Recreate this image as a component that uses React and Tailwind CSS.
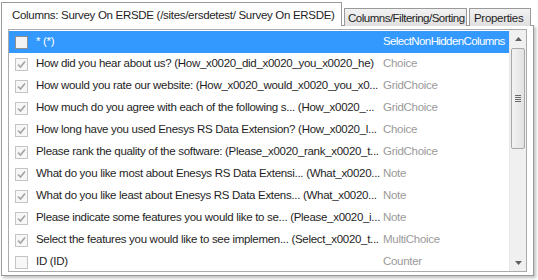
import { useState } from "react";

const rows = [
  { label: "* (*)", type: "SelectNonHiddenColumns", checked: false, selected: true },
  { label: "How did you hear about us? (How_x0020_did_x0020_you_x0020_he)", type: "Choice", checked: true },
  { label: "How would you rate our website: (How_x0020_would_x0020_you_x0...", type: "GridChoice", checked: true },
  { label: "How much do you agree with each of the following s... (How_x0020_...", type: "GridChoice", checked: true },
  { label: "How long have you used Enesys RS Data Extension? (How_x0020_l...", type: "Choice", checked: true },
  { label: "Please rank the quality of the software: (Please_x0020_rank_x0020_t...", type: "GridChoice", checked: true },
  { label: "What do you like most about Enesys RS Data Extensi... (What_x0020...", type: "Note", checked: true },
  { label: "What do you like least about Enesys RS Data Extens... (What_x0020...", type: "Note", checked: true },
  { label: "Please indicate some features you would like to se... (Please_x0020_i...", type: "Note", checked: true },
  { label: "Select the features you would like to see implemen... (Select_x0020_t...", type: "MultiChoice", checked: true },
  { label: "ID (ID)", type: "Counter", checked: false },
];

const CheckBox = ({ checked, selected }) => (
  <div
    className={`w-[13px] h-[13px] border flex items-center justify-center ${
      selected ? "border-[#8f8f8f] bg-[#f4f4f4]" : "border-[#c4c4c4] bg-[#f7f7f7]"
    }`}
  >
    {checked && (
      <svg width="9" height="9" viewBox="0 0 9 9">
        <path d="M1 4.5 L3.5 7 L8 1.5" fill="none" stroke="#a3a3a3" strokeWidth="1.6" />
      </svg>
    )}
  </div>
);

const App = () => {
  const [active] = useState(0);

  return (
    <div className="w-[538px] h-[280px] bg-white pl-[1px] pt-[2px] font-['Liberation_Sans',Arial,sans-serif] text-[11.5px] tracking-[-0.3px] text-[#1e1e1e]">
      {/* Tabs */}
      <div className="flex items-end h-[24px] w-[533px] relative z-10">
        <div className="h-[24px] w-[341px] border border-b-0 border-[#9a9a9a] bg-white pl-[10px] pt-[4px] whitespace-nowrap">
          Columns: Survey On ERSDE (/sites/ersdetest/ Survey On ERSDE)
        </div>
        <div className="h-[18px] ml-[2px] w-[123px] border border-b-0 border-[#9a9a9a] bg-gradient-to-b from-[#f2f2f2] to-[#e0e0e0] pl-[3px] pt-[1px] whitespace-nowrap tracking-[-0.5px]">
          Columns/Filtering/Sorting
        </div>
        <div className="h-[18px] ml-[2px] w-[62px] border border-b-0 border-[#9a9a9a] bg-gradient-to-b from-[#f2f2f2] to-[#e0e0e0] pl-[4px] pt-[1px] whitespace-nowrap">
          Properties
        </div>
      </div>

      {/* Panel */}
      <div className="w-[533px] h-[251px] -mt-[1px] border border-[#9a9a9a] bg-white px-[6px] pt-[3px] shadow-[2px_2px_3px_rgba(0,0,0,0.25)]">
        <div className="flex h-[243px] border border-[#ababab]">
          <div className="flex-1 pt-[1px] overflow-hidden">
            {rows.map((row) => (
              <div
                key={row.label}
                className={`flex items-center h-[22px] ${row.selected ? "bg-[#3399ff] text-white" : ""}`}
              >
                <div className="w-[27px] pl-[6px] flex items-center">
                  <CheckBox checked={row.checked} selected={row.selected} />
                </div>
                <div className="w-[347px] whitespace-nowrap overflow-hidden">{row.label}</div>
                <div
                  className={`whitespace-nowrap ${
                    row.selected ? "text-white tracking-[-0.6px]" : "text-[#9a9a9a]"
                  }`}
                >
                  {row.type}
                </div>
              </div>
            ))}
          </div>

          {/* Scrollbar */}
          <div className="w-[17px] bg-[#f0f0f0] border-l border-[#e8e8e8] flex flex-col items-center">
            <div className="h-[17px] flex items-center justify-center">
              <svg width="7" height="4" viewBox="0 0 7 4">
                <path d="M0 4 L3.5 0 L7 4 Z" fill="#606060" />
              </svg>
            </div>
            <div className="w-[14px] h-[101px] mt-[1px] border border-[#a8a8a8] rounded-[2px] bg-gradient-to-r from-[#f3f3f3] to-[#e2e2e2] flex items-center justify-center">
              <div className="flex flex-col gap-[1px]">
                <div className="w-[6px] h-[1px] bg-[#6a6a6a]" />
                <div className="w-[6px] h-[1px] bg-[#6a6a6a]" />
                <div className="w-[6px] h-[1px] bg-[#6a6a6a]" />
                <div className="w-[6px] h-[1px] bg-[#6a6a6a]" />
              </div>
            </div>
            <div className="flex-1" />
            <div className="h-[17px] flex items-center justify-center">
              <svg width="7" height="4" viewBox="0 0 7 4">
                <path d="M0 0 L7 0 L3.5 4 Z" fill="#606060" />
              </svg>
            </div>
          </div>
        </div>
      </div>
    </div>
  );
};

export default App;
